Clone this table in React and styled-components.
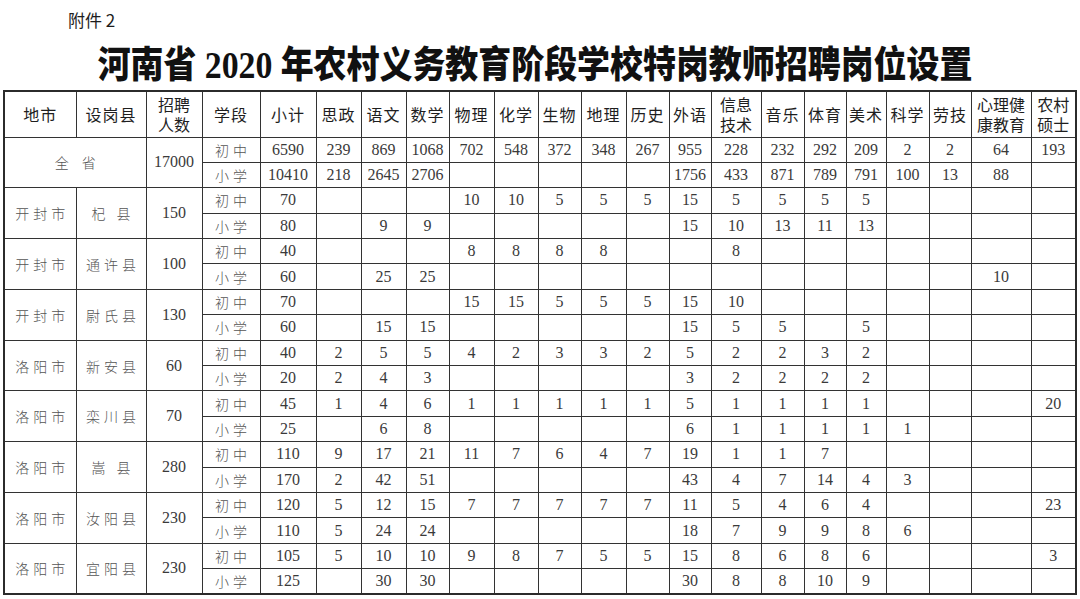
import React from "react";
import styled, { createGlobalStyle } from "styled-components";

const Global = createGlobalStyle`
  html, body { margin: 0; padding: 0; background: #fff; }
  body { width: 1080px; height: 599px; overflow: hidden; }
`;

const CJK = `"Noto Sans CJK SC", "Noto Sans", sans-serif`;
const SERIF = `"Liberation Serif", "Noto Sans CJK SC", serif`;

const Page = styled.div`
  width: 1080px;
  height: 599px;
  display: flex;
  flex-direction: column;
  padding-top: 9px;
  box-sizing: border-box;
`;

const Attachment = styled.div`
  font-family: ${CJK};
  font-size: 17px;
  line-height: 22px;
  color: #1d1d1d;
  padding-left: 68px;
  height: 22px;
`;

const TitleRow = styled.div`
  height: 59px;
  display: flex;
  justify-content: center;
  align-items: center;
  padding-top: 4px;
  padding-right: 10px;
  box-sizing: border-box;
`;

const Title = styled.h1`
  margin: 0;
  font-family: ${CJK};
  font-weight: 900;
  font-size: 36px;
  line-height: 40px;
  color: #111;
  white-space: nowrap;
  transform: scaleX(0.915) scaleY(1.04);
`;

const Digits = styled.span`
  font-family: ${SERIF};
  font-weight: 700;
  font-size: 37px;
  margin: 0 9px;
`;

const Table = styled.table`
  border-collapse: collapse;
  table-layout: fixed;
  width: 1072px;
  margin-left: 3px;
  border: 2px solid #2b2b2b;
`;

const Col = styled.col`
  width: ${(p) => p.$w}px;
`;

const HeadRow = styled.tr`
  height: 46px;
`;

const BodyRow = styled.tr`
  height: 25.4px;
`;

const HeadCell = styled.th`
  border: 1px solid #333;
  padding: 0;
  font-family: ${CJK};
  font-weight: 400;
  font-size: 16px;
  line-height: 20px;
  color: #1e1e1e;
  text-align: center;
  vertical-align: middle;
  white-space: pre-line;
  letter-spacing: ${(p) => (p.$tight ? "0px" : "1px")};
`;

const NumCell = styled.td`
  border: 1px solid #333;
  padding: 0;
  font-family: ${SERIF};
  font-size: 16px;
  line-height: 18px;
  color: #3a3a3a;
  text-align: center;
  vertical-align: middle;
`;

const TextCell = styled.td`
  border: 1px solid #333;
  padding: 0 0 0 ${(p) => p.$ls || 3}px;
  font-family: ${CJK};
  font-weight: 300;
  font-size: 14px;
  line-height: 18px;
  color: #555;
  text-align: center;
  vertical-align: middle;
  letter-spacing: ${(p) => p.$ls || 3}px;
  white-space: pre;
`;

const widths = [72, 70, 56, 58, 56, 45, 45, 43, 45, 44, 43, 45, 43, 42, 50, 43, 42, 40, 43, 42, 60, 45];

const headers = [
  "地市",
  "设岗县",
  "招聘\n人数",
  "学段",
  "小计",
  "思政",
  "语文",
  "数学",
  "物理",
  "化学",
  "生物",
  "地理",
  "历史",
  "外语",
  "信息\n技术",
  "音乐",
  "体育",
  "美术",
  "科学",
  "劳技",
  "心理健\n康教育",
  "农村\n硕士",
];

const _ = "";

const units = [
  {
    city: "全 省",
    county: null,
    total: "17000",
    rows: [
      ["6590", "239", "869", "1068", "702", "548", "372", "348", "267", "955", "228", "232", "292", "209", "2", "2", "64", "193"],
      ["10410", "218", "2645", "2706", _, _, _, _, _, "1756", "433", "871", "789", "791", "100", "13", "88", _],
    ],
  },
  {
    city: "开封市",
    county: "杞 县",
    total: "150",
    rows: [
      ["70", _, _, _, "10", "10", "5", "5", "5", "15", "5", "5", "5", "5", _, _, _, _],
      ["80", _, "9", "9", _, _, _, _, _, "15", "10", "13", "11", "13", _, _, _, _],
    ],
  },
  {
    city: "开封市",
    county: "通许县",
    total: "100",
    rows: [
      ["40", _, _, _, "8", "8", "8", "8", _, _, "8", _, _, _, _, _, _, _],
      ["60", _, "25", "25", _, _, _, _, _, _, _, _, _, _, _, _, "10", _],
    ],
  },
  {
    city: "开封市",
    county: "尉氏县",
    total: "130",
    rows: [
      ["70", _, _, _, "15", "15", "5", "5", "5", "15", "10", _, _, _, _, _, _, _],
      ["60", _, "15", "15", _, _, _, _, _, "15", "5", "5", _, "5", _, _, _, _],
    ],
  },
  {
    city: "洛阳市",
    county: "新安县",
    total: "60",
    rows: [
      ["40", "2", "5", "5", "4", "2", "3", "3", "2", "5", "2", "2", "3", "2", _, _, _, _],
      ["20", "2", "4", "3", _, _, _, _, _, "3", "2", "2", "2", "2", _, _, _, _],
    ],
  },
  {
    city: "洛阳市",
    county: "栾川县",
    total: "70",
    rows: [
      ["45", "1", "4", "6", "1", "1", "1", "1", "1", "5", "1", "1", "1", "1", _, _, _, "20"],
      ["25", _, "6", "8", _, _, _, _, _, "6", "1", "1", "1", "1", "1", _, _, _],
    ],
  },
  {
    city: "洛阳市",
    county: "嵩 县",
    total: "280",
    rows: [
      ["110", "9", "17", "21", "11", "7", "6", "4", "7", "19", "1", "1", "7", _, _, _, _, _],
      ["170", "2", "42", "51", _, _, _, _, _, "43", "4", "7", "14", "4", "3", _, _, _],
    ],
  },
  {
    city: "洛阳市",
    county: "汝阳县",
    total: "230",
    rows: [
      ["120", "5", "12", "15", "7", "7", "7", "7", "7", "11", "5", "4", "6", "4", _, _, _, "23"],
      ["110", "5", "24", "24", _, _, _, _, _, "18", "7", "9", "9", "8", "6", _, _, _],
    ],
  },
  {
    city: "洛阳市",
    county: "宜阳县",
    total: "230",
    rows: [
      ["105", "5", "10", "10", "9", "8", "7", "5", "5", "15", "8", "6", "8", "6", _, _, _, "3"],
      ["125", _, "30", "30", _, _, _, _, _, "30", "8", "8", "10", "9", _, _, _, _],
    ],
  },
];

const stages = ["初中", "小学"];

function Unit({ unit }) {
  return (
    <>
      {unit.rows.map((vals, i) => (
        <BodyRow key={i}>
          {i === 0 && (
            <>
              {unit.county === null ? (
                <TextCell rowSpan={2} colSpan={2} $ls={5}>
                  {unit.city}
                </TextCell>
              ) : (
                <>
                  <TextCell rowSpan={2} $ls={4}>{unit.city}</TextCell>
                  <TextCell rowSpan={2} $ls={4}>{unit.county}</TextCell>
                </>
              )}
              <NumCell rowSpan={2}>{unit.total}</NumCell>
            </>
          )}
          <TextCell $ls={4}>{stages[i]}</TextCell>
          {vals.map((v, j) => (
            <NumCell key={j}>{v}</NumCell>
          ))}
        </BodyRow>
      ))}
    </>
  );
}

export default function App() {
  return (
    <>
      <Global />
      <Page>
        <Attachment>附件 2</Attachment>
        <TitleRow>
          <Title>
            河南省<Digits>2020</Digits>年农村义务教育阶段学校特岗教师招聘岗位设置
          </Title>
        </TitleRow>
        <Table>
          <colgroup>
            {widths.map((w, i) => (
              <Col key={i} $w={w} />
            ))}
          </colgroup>
          <thead>
            <HeadRow>
              {headers.map((h, i) => (
                <HeadCell key={i} $tight={h.includes("\n")}>
                  {h}
                </HeadCell>
              ))}
            </HeadRow>
          </thead>
          <tbody>
            {units.map((u, i) => (
              <Unit key={i} unit={u} />
            ))}
          </tbody>
        </Table>
      </Page>
    </>
  );
}
